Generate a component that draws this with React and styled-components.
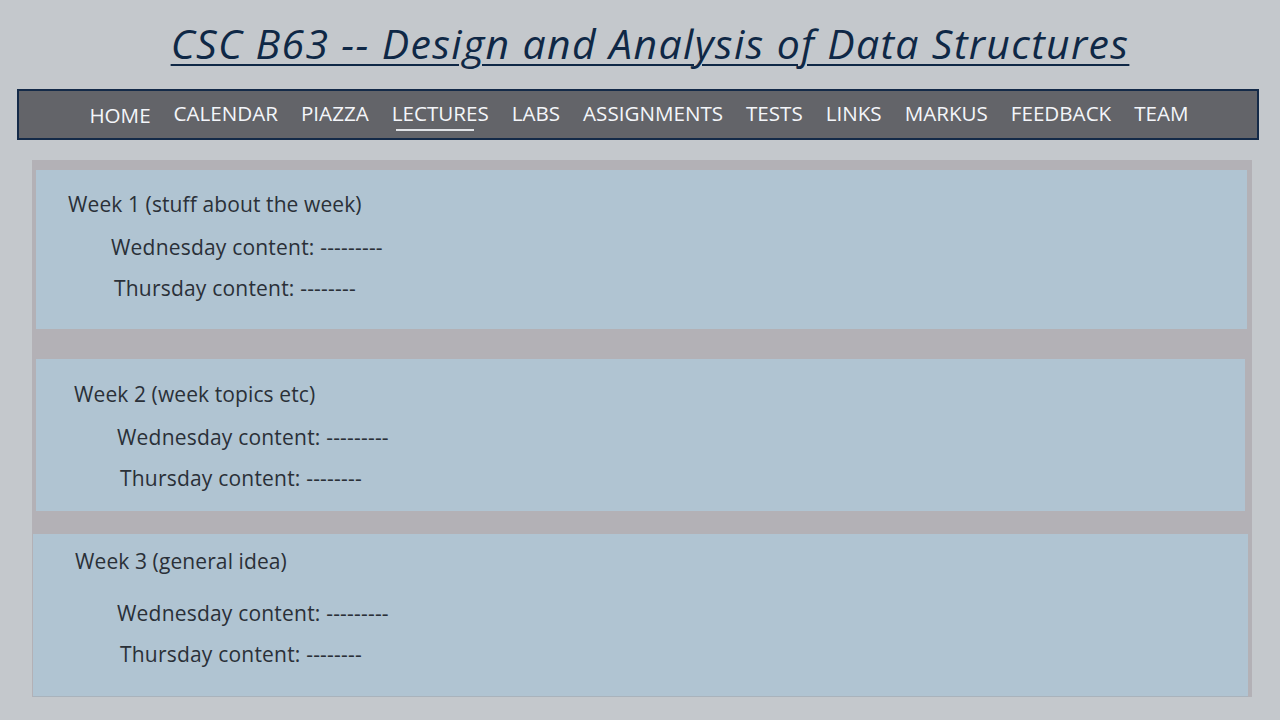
import React from 'react';
import styled, { createGlobalStyle } from 'styled-components';

const GlobalStyle = createGlobalStyle`
  html, body {
    margin: 0;
    padding: 0;
    background-color: #c4c8cc;
  }
  body {
    font-family: "Open Sans", "Noto Sans", sans-serif;
  }
`;

const Page = styled.div`
  width: 1280px;
  height: 720px;
  padding: 17px 21px 0 17px;
  box-sizing: border-box;
  display: flex;
  flex-direction: column;
`;

const Title = styled.h1`
  margin: 0;
  padding-left: 24px;
  height: 72px;
  text-align: center;
  font-size: 41px;
  font-weight: 400;
  font-style: italic;
  letter-spacing: 1.35px;
  line-height: 52px;
  color: #0f2846;
  text-decoration: underline;
  text-decoration-thickness: 2px;
  text-underline-offset: 5px;
`;

const NavBar = styled.nav`
  height: 51px;
  box-sizing: border-box;
  border: 2px solid #142a48;
  background-color: #636469;
  display: flex;
  align-items: center;
  justify-content: center;
  gap: 23px;
  padding: 0 0 3px 2px;
`;

const NavItem = styled.a`
  position: relative;
  color: #f4f6fa;
  font-size: 20.6px;
  line-height: 28px;
  text-decoration: none;
  margin-top: ${(p) => (p.$low ? '4px' : '0')};

  &::after {
    content: '';
    display: ${(p) => (p.$active ? 'block' : 'none')};
    position: absolute;
    left: 4px;
    right: 15px;
    bottom: -4px;
    height: 2px;
    background-color: #e2e4e8;
  }
`;

const Panel = styled.main`
  margin: 20px 7px 0 15px;
  height: 537px;
  background-color: #b3b1b6;
  display: flex;
  flex-direction: column;
`;

const Card = styled.section`
  background-color: #b0c4d2;
  margin: ${(p) => p.$margin};
  height: ${(p) => p.$height}px;
  box-sizing: border-box;
  border-bottom: ${(p) => (p.$edge ? '1px solid #a9b3bc' : 'none')};
  display: flex;
  flex-direction: column;
`;

const WeekTitle = styled.h2`
  margin: ${(p) => p.$top}px 0 0 ${(p) => p.$indent}px;
  font-size: 21px;
  font-weight: 400;
  letter-spacing: 0.1px;
  line-height: 28px;
  color: #2a3038;
`;

const DayLine = styled.p`
  margin: ${(p) => p.$top}px 0 0 ${(p) => p.$indent}px;
  font-size: 21px;
  letter-spacing: 0.2px;
  line-height: 28px;
  color: #2a3038;
`;

const navLinks = [
  'HOME', 'CALENDAR', 'PIAZZA', 'LECTURES', 'LABS', 'ASSIGNMENTS',
  'TESTS', 'LINKS', 'MARKUS', 'FEEDBACK', 'TEAM',
];

const weeks = [
  { title: 'Week 1 (stuff about the week)', margin: '10px 5px 0 4px', height: 159, titleTop: 20, titleIndent: 32, wedTop: 15, thuTop: 13, dayIndent: 75 },
  { title: 'Week 2 (week topics etc)', margin: '30px 7px 0 4px', height: 152, titleTop: 21, titleIndent: 38, wedTop: 15, thuTop: 13, dayIndent: 81 },
  { title: 'Week 3 (general idea)', margin: '23px 4px 0 1px', height: 163, titleTop: 13, titleIndent: 42, wedTop: 24, thuTop: 13, dayIndent: 84, edge: true },
];

export default function App() {
  return (
    <>
      <GlobalStyle />
      <Page>
        <Title>CSC B63 -- Design and Analysis of Data Structures</Title>
        <NavBar>
          {navLinks.map((link) => (
            <NavItem key={link} href="#" $active={link === 'LECTURES'} $low={link === 'HOME'}>
              {link}
            </NavItem>
          ))}
        </NavBar>
        <Panel>
          {weeks.map((w) => (
            <Card key={w.title} $margin={w.margin} $height={w.height} $edge={w.edge}>
              <WeekTitle $top={w.titleTop} $indent={w.titleIndent}>{w.title}</WeekTitle>
              <DayLine $top={w.wedTop} $indent={w.dayIndent}>Wednesday content: ---------</DayLine>
              <DayLine $top={w.thuTop} $indent={w.dayIndent + 3}>Thursday content: --------</DayLine>
            </Card>
          ))}
        </Panel>
      </Page>
    </>
  );
}
